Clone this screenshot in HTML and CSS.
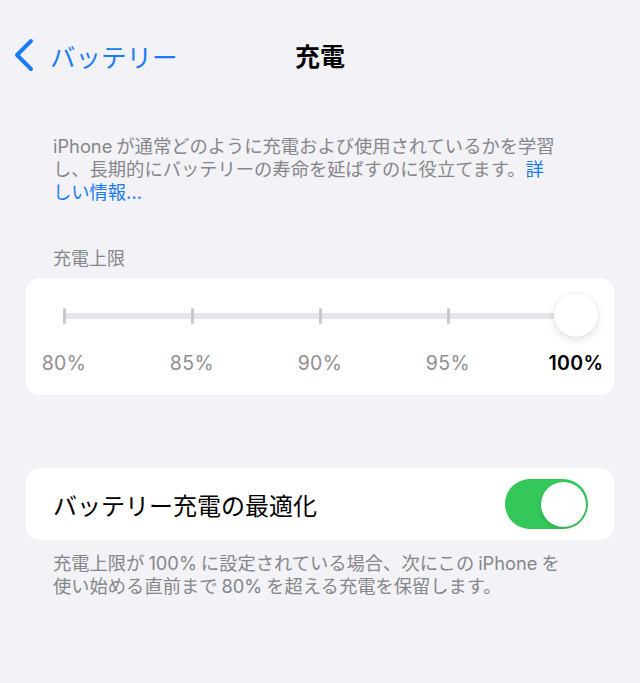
FILE: index.html
```html
<!DOCTYPE html>
<html lang="ja">
<head>
<meta charset="utf-8">
<title>充電</title>
<link rel="stylesheet" href="styles.css">
</head>
<body>
<header class="nav">
  <a class="back" href="#">
    <svg class="chevron" width="22" height="34" viewBox="0 0 22 34" aria-hidden="true">
      <polyline points="18,3 4,17 18,31" fill="none" stroke="currentColor" stroke-width="4" stroke-linecap="round" stroke-linejoin="round"/>
    </svg>
    <span>バッテリー</span>
  </a>
  <h1 class="title">充電</h1>
  <span></span>
</header>

<p class="note intro"><span class="latin-end">iPhone</span>が通常どのように充電および使用されているかを学習<br>し、長期的にバッテリーの寿命を延ばすのに役立てます。<a class="link" href="#">詳<br>しい情報...</a></p>

<div class="section-label">充電上限</div>
<section class="card limit">
  <div class="slider">
    <div class="track">
      <span class="tick" style="left:0%"></span>
      <span class="tick" style="left:25%"></span>
      <span class="tick" style="left:50%"></span>
      <span class="tick" style="left:75%"></span>
      <span class="thumb"></span>
    </div>
    <div class="scale">
      <span class="step"><span>80%</span></span>
      <span class="step"><span>85%</span></span>
      <span class="step"><span>90%</span></span>
      <span class="step"><span>95%</span></span>
      <span class="step active"><span>100%</span></span>
    </div>
  </div>
</section>

<section class="card row">
  <span class="row-label">バッテリー充電の最適化</span>
  <span class="switch on"><span class="knob"></span></span>
</section>
<p class="note footer">充電上限が<span class="latin">100%</span>に設定されている場合、次にこの<span class="latin">iPhone</span>を<br>使い始める直前まで<span class="latin">80%</span>を超える充電を保留します。</p>
</body>
</html>
```

FILE: styles.css
```css
* { box-sizing: border-box; }

html, body {
  margin: 0;
  padding: 0;
}

body {
  width: 640px;
  height: 683px;
  background: #f2f2f7;
  font-family: Inter, "Noto Sans CJK JP", sans-serif;
  color: #000;
  overflow: hidden;
}

/* navigation bar */
.nav {
  height: 110px;
  display: grid;
  grid-template-columns: 1fr auto 1fr;
  align-items: center;
}

.back {
  display: flex;
  align-items: center;
  gap: 15px;
  padding-left: 13px;
  color: #1a7cf7;
  text-decoration: none;
  font-family: "Noto Sans CJK JP", sans-serif;
  font-size: 25.5px;
}

.chevron { display: block; }

.title {
  margin: 0;
  font-family: "Noto Sans CJK JP", sans-serif;
  font-size: 25px;
  font-weight: 700;
}

/* grey explanatory text */
.note {
  margin: 0;
  padding: 0 40px 0 53px;
  font-size: 18.3px;
  line-height: 23px;
  color: #86868b;
}

/* spacing between Latin runs and Japanese text */
.latin { margin: 0 4px; }
.latin-end { margin-right: 4px; }

.intro { padding-top: 25px; }

.link {
  color: #1a7cf7;
  text-decoration: none;
}

.section-label {
  margin: 43px 0 8px 53px;
  font-size: 18px;
  line-height: 23px;
  color: #86868b;
}

.card {
  margin: 0 26px;
  background: #fff;
  border-radius: 14px;
}

/* charge limit slider */
.limit {
  height: 117px;
  padding: 35px 38px 0;
}

.track {
  position: relative;
  height: 6px;
  border-radius: 3px;
  background: #e5e5ea;
}

.tick {
  position: absolute;
  top: -5px;
  width: 3px;
  height: 16px;
  margin-left: -1.5px;
  border-radius: 1.5px;
  background: #c7c7cc;
}

.thumb {
  position: absolute;
  left: 100%;
  top: 50%;
  width: 44px;
  height: 44px;
  margin: -23px 0 0 -22px;
  border-radius: 50%;
  background: #fff;
  box-shadow: 0 3px 8px rgba(0, 0, 0, 0.12), 0 0 0 0.5px rgba(0, 0, 0, 0.05);
}

.scale {
  display: flex;
  justify-content: space-between;
  margin-top: 32px;
}

.step {
  width: 0;
  display: flex;
  justify-content: center;
  white-space: nowrap;
  font-size: 19.5px;
  line-height: 24px;
  letter-spacing: 0.4px;
  color: #8e8e93;
}

.step.active {
  color: #000;
  font-weight: 600;
}

/* optimised charging row */
.row {
  margin-top: 73px;
  height: 72px;
  display: flex;
  align-items: center;
  justify-content: space-between;
  padding: 0 26px 0 27px;
}

.row-label {
  font-family: "Noto Sans CJK JP", sans-serif;
  font-size: 24px;
}

.switch {
  width: 83px;
  height: 50px;
  border-radius: 25px;
  background: #e9e9eb;
  display: flex;
  align-items: center;
  padding: 0 2px;
}

.switch.on {
  background: #34c759;
  justify-content: flex-end;
}

.knob {
  width: 45px;
  height: 45px;
  border-radius: 50%;
  background: #fff;
  box-shadow: 0 2px 4px rgba(0, 0, 0, 0.12);
}

.footer { padding-top: 12px; }
```
